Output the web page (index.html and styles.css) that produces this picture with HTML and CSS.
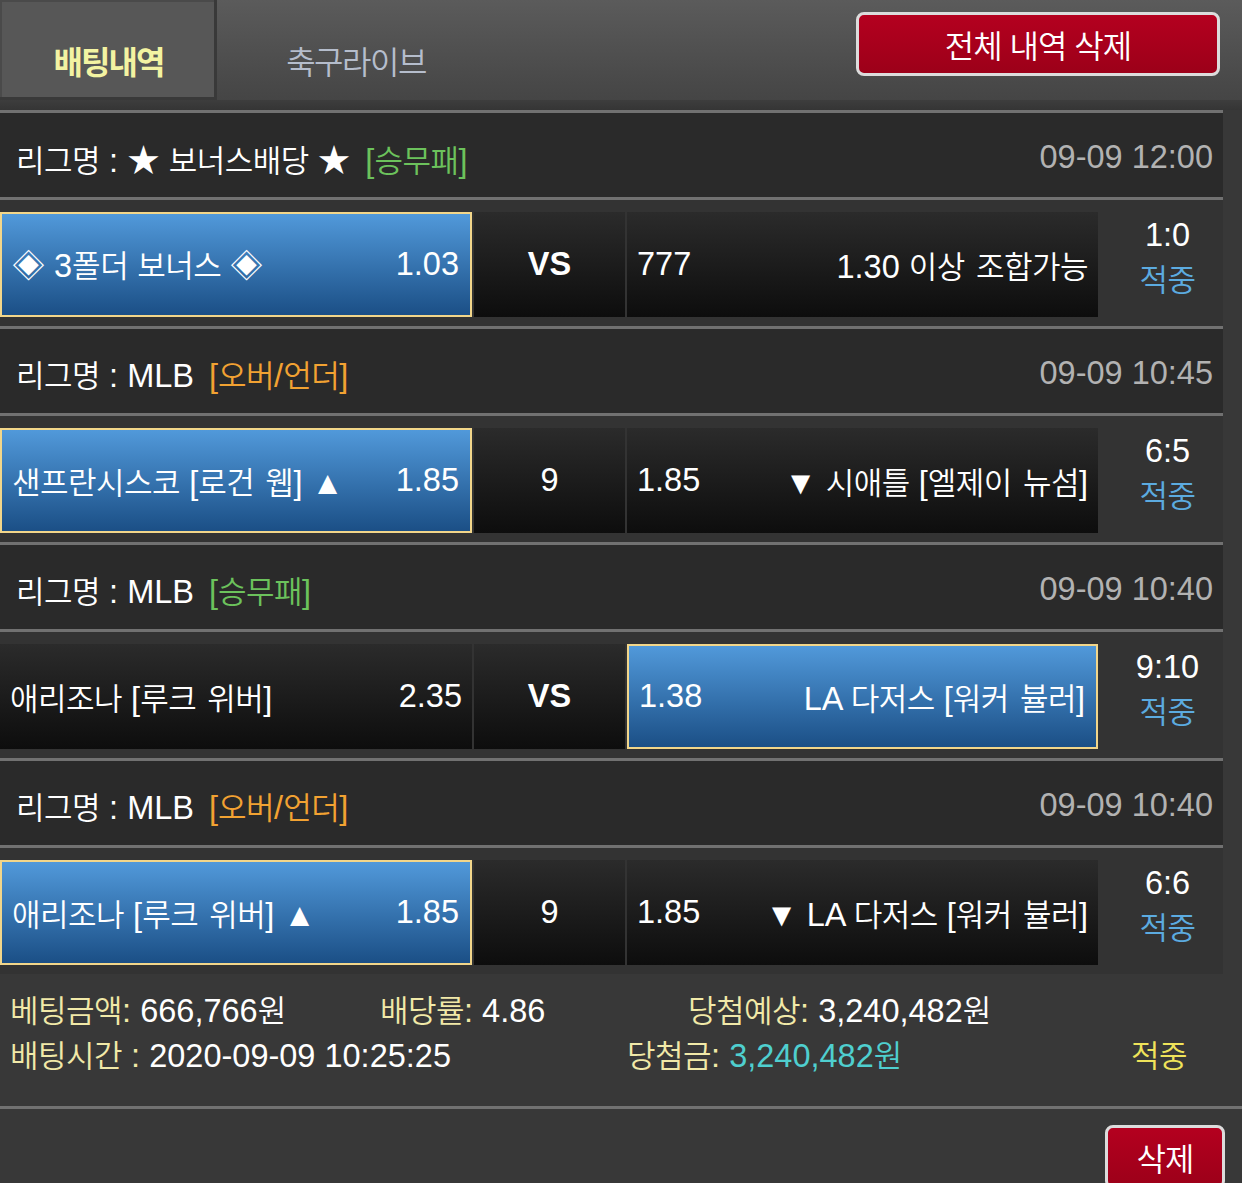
FILE: index.html
```html
<!DOCTYPE html>
<html lang="ko">
<head>
<meta charset="utf-8">
<title>배팅내역</title>
<link rel="stylesheet" href="styles.css">
</head>
<body>
<div class="top">
  <div class="tab on">배팅내역</div>
  <div class="tab tab2">축구라이브</div>
  <div class="btn btn-all">전체 내역 삭제</div>
</div>
<div class="band"></div>
<div class="list">
  <div class="league">
    <div><span class="ko">리그명</span> : ★ <span class="ko">보너스배당</span> ★ <span class="tag green">[<span class="ko">승무패</span>]</span></div>
    <div class="date">09-09 12:00</div>
  </div>
  <div class="match">
    <div class="cell sel"><span>◈ 3<span class="ko">폴더</span> <span class="ko">보너스</span> ◈</span><span>1.03</span></div>
    <div class="cell mid vs">VS</div>
    <div class="cell"><span>777</span><span>1.30 <span class="ko">이상 조합가능</span></span></div>
    <div class="score"><div>1:0</div><div class="hit ko">적중</div></div>
  </div>

  <div class="league">
    <div><span class="ko">리그명</span> : MLB <span class="tag orange">[<span class="ko">오버</span>/<span class="ko">언더</span>]</span></div>
    <div class="date">09-09 10:45</div>
  </div>
  <div class="match">
    <div class="cell sel"><span><span class="ko">샌프란시스코</span> [<span class="ko">로건 웹</span>] ▲</span><span>1.85</span></div>
    <div class="cell mid">9</div>
    <div class="cell"><span>1.85</span><span>▼ <span class="ko">시애틀</span> [<span class="ko">엘제이 뉴섬</span>]</span></div>
    <div class="score"><div>6:5</div><div class="hit ko">적중</div></div>
  </div>

  <div class="league">
    <div><span class="ko">리그명</span> : MLB <span class="tag green">[<span class="ko">승무패</span>]</span></div>
    <div class="date">09-09 10:40</div>
  </div>
  <div class="match">
    <div class="cell"><span><span class="ko">애리조나</span> [<span class="ko">루크 위버</span>]</span><span>2.35</span></div>
    <div class="cell mid vs">VS</div>
    <div class="cell sel"><span>1.38</span><span>LA <span class="ko">다저스</span> [<span class="ko">워커 뷸러</span>]</span></div>
    <div class="score"><div>9:10</div><div class="hit ko">적중</div></div>
  </div>

  <div class="league">
    <div><span class="ko">리그명</span> : MLB <span class="tag orange">[<span class="ko">오버</span>/<span class="ko">언더</span>]</span></div>
    <div class="date">09-09 10:40</div>
  </div>
  <div class="match">
    <div class="cell sel"><span><span class="ko">애리조나</span> [<span class="ko">루크 위버</span>] ▲</span><span>1.85</span></div>
    <div class="cell mid">9</div>
    <div class="cell"><span>1.85</span><span>▼ LA <span class="ko">다저스</span> [<span class="ko">워커 뷸러</span>]</span></div>
    <div class="score"><div>6:6</div><div class="hit ko">적중</div></div>
  </div>
</div>
<div class="summary">
  <div class="srow">
    <div class="s1"><span class="lbl"><span class="ko">베팅금액</span>:</span> 666,766<span class="ko">원</span></div>
    <div class="s2"><span class="lbl"><span class="ko">배당률</span>:</span> 4.86</div>
    <div><span class="lbl"><span class="ko">당첨예상</span>:</span> 3,240,482<span class="ko">원</span></div>
  </div>
  <div class="srow">
    <div class="s3"><span class="lbl"><span class="ko">배팅시간</span> :</span> 2020-09-09 10:25:25</div>
    <div class="s4"><span class="lbl"><span class="ko">당첨금</span>:</span> <span class="cyan">3,240,482<span class="ko">원</span></span></div>
    <div class="hit-y ko">적중</div>
  </div>
</div>
<div class="foot">
  <div class="btn btn-del">삭제</div>
</div>
</body>
</html>
```
FILE: styles.css
```css
* { box-sizing: border-box; margin: 0; padding: 0; }
html, body { background: #383838; }
body {
  width: 1242px;
  font-family: "Liberation Sans", "Noto Sans CJK KR", sans-serif;
  font-size: 32.5px;
  color: #ffffff;
}
.ko { font-size: 31px; letter-spacing: -0.5px; word-spacing: 3px; font-weight: 350; }

.top {
  height: 100px;
  display: flex;
  background: linear-gradient(#5b5b5b, #454545);
}
.tab {
  width: 217px;
  display: flex;
  align-items: flex-end;
  justify-content: center;
  padding-bottom: 17px;
  font-size: 32px;
  letter-spacing: -1.5px;
  color: #b5bdcc;
  font-weight: 350;
}
.tab.on {
  background: #575757;
  color: #f3f3a2;
  font-weight: bold;
  letter-spacing: -2px;
  box-shadow: inset -3px -3px 0 #393939, inset 2px 2px 0 #4a4a4a;
}
.tab2 { width: 278px; }
.btn {
  display: flex;
  align-items: center;
  justify-content: center;
  background: linear-gradient(#b4001f, #9c0019);
  border: 3px solid #dcdcdc;
  border-radius: 8px;
  color: #ffffff;
  font-size: 32px;
  letter-spacing: -1px;
  font-weight: 350;
}
.btn-all {
  margin-left: auto;
  margin-right: 22px;
  margin-top: 12px;
  width: 364px;
  height: 64px;
}
.band { height: 10px; background: linear-gradient(#3d3d3d, #353535); }

.list { width: 1223px; }
.league {
  height: 87px;
  border-top: 3px solid #717171;
  background: #2a2a2a;
  display: flex;
  align-items: center;
  justify-content: space-between;
  padding: 5px 10px 0 16px;
}
.tag { margin-left: 6px; }
.green { color: #6cc25c; }
.orange { color: #f2a232; }
.date { color: #b2b2b2; }

.match {
  height: 129px;
  border-top: 3px solid #717171;
  background: #333333;
  display: grid;
  grid-template-columns: 472px 151px 471px 1fr;
  column-gap: 2px;
  padding-top: 12px;
  align-items: start;
}
.cell {
  height: 105px;
  display: flex;
  align-items: center;
  justify-content: space-between;
  padding: 0 10px;
  background: linear-gradient(#2b2b2b, #0d0d0d);
  white-space: nowrap;
}
.cell.sel {
  background: linear-gradient(#5199da, #1b4f86);
  border: 2px solid #f2d68a;
  padding: 0 11px 0 10px;
}
.cell.mid { justify-content: center; }
.vs { font-weight: bold; }
.score {
  text-align: center;
  line-height: 46px;
  padding-left: 12px;
}
.hit { color: #5cabe0; }

.summary { padding: 15px 0 27px 10px; }
.srow { display: flex; line-height: 45px; white-space: nowrap; }
.s1 { width: 370px; }
.s2 { width: 308px; }
.s3 { width: 617px; }
.s4 { width: 504px; }
.lbl { color: #f1e9a8; }
.cyan { color: #4fcfcf; }
.hit-y { color: #efe35a; }

.foot {
  border-top: 3px solid #717171;
  display: flex;
  justify-content: flex-end;
  padding: 16px 17px 20px 0;
}
.btn-del { width: 120px; height: 64px; }
```
